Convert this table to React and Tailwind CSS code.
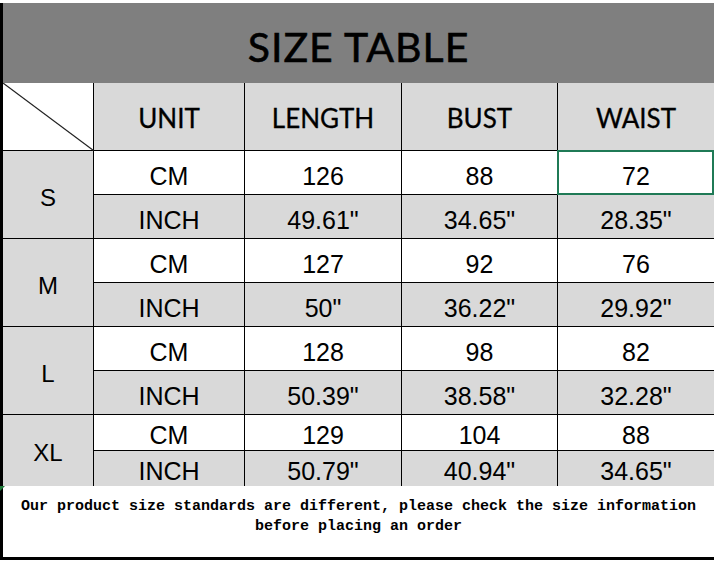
import React from "react";

const rows = [
  { size: "S", cm: ["126", "88", "72"], inch: ['49.61"', '34.65"', '28.35"'] },
  { size: "M", cm: ["127", "92", "76"], inch: ['50"', '36.22"', '29.92"'] },
  { size: "L", cm: ["128", "98", "82"], inch: ['50.39"', '38.58"', '32.28"'] },
  { size: "XL", cm: ["129", "104", "88"], inch: ['50.79"', '40.94"', '34.65"'] },
];

const arial = { fontFamily: '"Liberation Sans", Arial, sans-serif' };
const lato = { fontFamily: 'Lato, "Open Sans", sans-serif' };

function Cell({ children, gray, short, sel }) {
  return (
    <div
      className={`relative flex items-center justify-center text-[25px] text-black ${
        short ? "pt-[6px]" : "pt-[8px]"
      } ${gray ? "bg-[#d9d9d9]" : "bg-white"}`}
      style={arial}
    >
      {children}
      {sel && (
        <>
          <span className="absolute -left-px -top-px -bottom-px right-0 border-2 border-[#1f7a56]" />
          <span className="absolute -bottom-[2px] right-0 w-[3px] h-[3px] bg-[#1f7a56]" />
        </>
      )}
    </div>
  );
}

export default function App() {
  return (
    <div className="relative w-[714px] h-[562px] bg-white overflow-hidden">
      <div className="h-[3px] bg-white" />
      <div className="border-l-[3px] border-b-[3px] border-black">
        <div
          className="h-[80px] bg-[#7f7f7f] flex items-center justify-center pt-[7px] text-[41px] tracking-[1px] text-black [-webkit-text-stroke:0.6px_black]"
          style={lato}
        >
          SIZE TABLE
        </div>
        <div className="grid grid-cols-[90px_150px_156px_155px_1fr] grid-rows-[67px_43px_43px_43px_43px_43px_43px_35px_35px] gap-px bg-black">
          <div className="relative bg-white">
            <svg className="absolute inset-0" width="91" height="68" viewBox="0 0 91 68">
              <line x1="0" y1="0" x2="90.5" y2="67.5" stroke="#222" strokeWidth="1.2" />
            </svg>
          </div>
          {["UNIT", "LENGTH", "BUST", "WAIST"].map((t) => (
            <div
              key={t}
              className="bg-[#d9d9d9] flex items-center justify-center pt-[3px] text-[26px] text-black [-webkit-text-stroke:0.3px_black]"
              style={lato}
            >
              {t}
            </div>
          ))}
          {rows.map((r, i) => {
            const short = r.size === "XL";
            return (
              <React.Fragment key={r.size}>
                <div
                  className={`row-span-2 bg-[#d9d9d9] flex items-center justify-center text-[24px] text-black ${
                    short ? "pt-[4px]" : "pt-[7px]"
                  }`}
                  style={arial}
                >
                  {r.size}
                </div>
                <Cell short={short}>CM</Cell>
                {r.cm.map((v, j) => (
                  <Cell key={"c" + j} short={short} sel={i === 0 && j === 2}>
                    {v}
                  </Cell>
                ))}
                <Cell gray short={short}>INCH</Cell>
                {r.inch.map((v, j) => (
                  <Cell key={"n" + j} gray short={short}>
                    {v}
                  </Cell>
                ))}
              </React.Fragment>
            );
          })}
        </div>
        <div
          className="h-[71px] bg-white pt-[11px] text-center text-[15px] leading-[20px] font-bold text-black"
          style={{ fontFamily: '"Liberation Mono", "Courier New", monospace' }}
        >
          Our product size standards are different, please check the size information
          <br />
          before placing an order
        </div>
      </div>
      <svg className="absolute left-0 top-[486px]" width="5" height="5" viewBox="0 0 5 5">
        <polygon points="0,0 5,0 0,5" fill="#1f7a3a" />
      </svg>
    </div>
  );
}
